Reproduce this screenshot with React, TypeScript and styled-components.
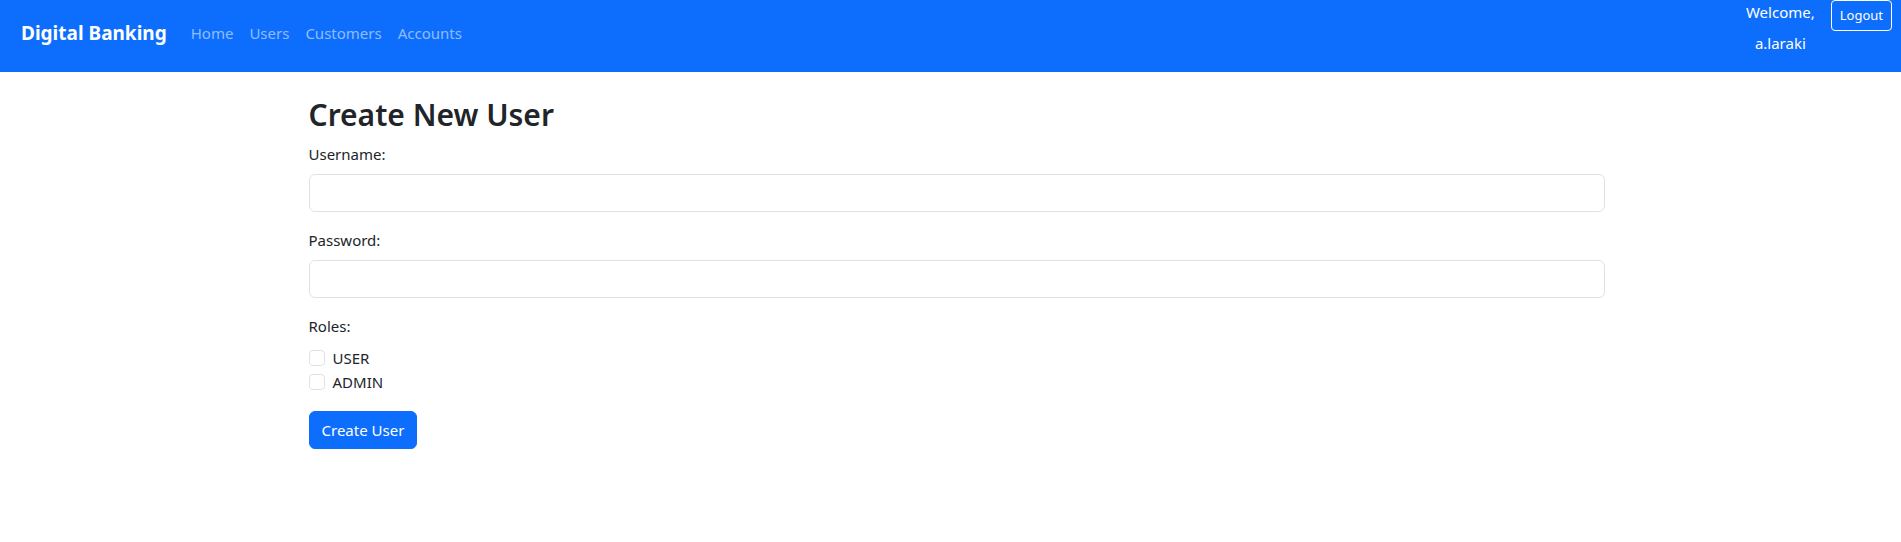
import React from "react";
import styled, { createGlobalStyle } from "styled-components";

const GlobalStyle = createGlobalStyle`
  html, body { margin: 0; padding: 0; background: #fff; }
  body {
    font-family: "Segoe UI", "Noto Sans", "Liberation Sans", sans-serif;
    font-size: 15px;
    line-height: 24px;
    color: #212529;
  }
  *, *::before, *::after { box-sizing: border-box; }
`;

const Navbar = styled.nav`
  display: flex;
  justify-content: space-between;
  align-items: center;
  height: 72px;
  background: #0d6efd;
  padding: 0 9px 0 21px;
`;

const NavLeft = styled.div`
  display: flex;
  align-items: center;
  padding-bottom: 7px;
`;

const Brand = styled.a`
  color: #fff;
  font-size: 19px;
  font-weight: 700;
  line-height: 30px;
  margin-right: 16px;
  text-decoration: none;
`;

const NavLink = styled.a`
  color: rgba(255, 255, 255, 0.55);
  padding: 0 8px;
  font-size: 15px;
  line-height: 24px;
  text-decoration: none;
`;

const NavRight = styled.div`
  display: flex;
  align-self: flex-start;
  align-items: flex-start;
  gap: 16px;
`;

const Welcome = styled.div`
  display: flex;
  flex-direction: column;
  align-items: center;
  color: #fff;
  font-size: 15px;
  gap: 6px;
`;

const WelcomeLine = styled.span`
  line-height: 25px;
`;

const LogoutButton = styled.button`
  font-family: inherit;
  font-size: 13px;
  line-height: 21px;
  padding: 4px 8px;
  color: #fff;
  background: transparent;
  border: 1px solid #fff;
  border-radius: 4px;
`;

const Container = styled.main`
  max-width: 1320px;
  margin: 24px auto 0;
  padding: 0 6px 0 18px;
`;

const Title = styled.h2`
  font-size: 30px;
  font-weight: 600;
  line-height: 38px;
  margin: 0 0 8px;
`;

const FormGroup = styled.div`
  margin-bottom: 16px;
`;

const Label = styled.label`
  display: block;
  margin-bottom: 8px;
  line-height: 24px;
`;

const Input = styled.input`
  display: block;
  width: 100%;
  height: 38px;
  padding: 6px 12px;
  font-family: inherit;
  font-size: 15px;
  border: 1px solid #dee2e6;
  border-radius: 6px;
  background: #fff;
  outline: none;
`;

const Check = styled.label`
  display: flex;
  align-items: center;
  min-height: 24px;
  gap: 8px;
  line-height: 24px;
`;

const CheckBox = styled.input`
  appearance: none;
  width: 16px;
  height: 16px;
  margin: 0;
  border: 1px solid #dee2e6;
  border-radius: 4px;
  background: #fff;
`;

const SubmitButton = styled.button`
  font-family: inherit;
  font-size: 15px;
  line-height: 24px;
  padding: 6px 12px;
  color: #fff;
  background: #0d6efd;
  border: 1px solid #0d6efd;
  border-radius: 6px;
  margin-top: 1px;
`;

export default function App() {
  return (
    <>
      <GlobalStyle />
      <Navbar>
        <NavLeft>
          <Brand href="#">Digital Banking</Brand>
          <NavLink href="#">Home</NavLink>
          <NavLink href="#">Users</NavLink>
          <NavLink href="#">Customers</NavLink>
          <NavLink href="#">Accounts</NavLink>
        </NavLeft>
        <NavRight>
          <Welcome>
            <WelcomeLine>Welcome,</WelcomeLine>
            <WelcomeLine>a.laraki</WelcomeLine>
          </Welcome>
          <LogoutButton>Logout</LogoutButton>
        </NavRight>
      </Navbar>
      <Container>
        <Title>Create New User</Title>
        <FormGroup>
          <Label htmlFor="username">Username:</Label>
          <Input id="username" type="text" />
        </FormGroup>
        <FormGroup>
          <Label htmlFor="password">Password:</Label>
          <Input id="password" type="password" />
        </FormGroup>
        <FormGroup>
          <Label as="div">Roles:</Label>
          <Check>
            <CheckBox type="checkbox" />
            USER
          </Check>
          <Check>
            <CheckBox type="checkbox" />
            ADMIN
          </Check>
        </FormGroup>
        <SubmitButton>Create User</SubmitButton>
      </Container>
    </>
  );
}
